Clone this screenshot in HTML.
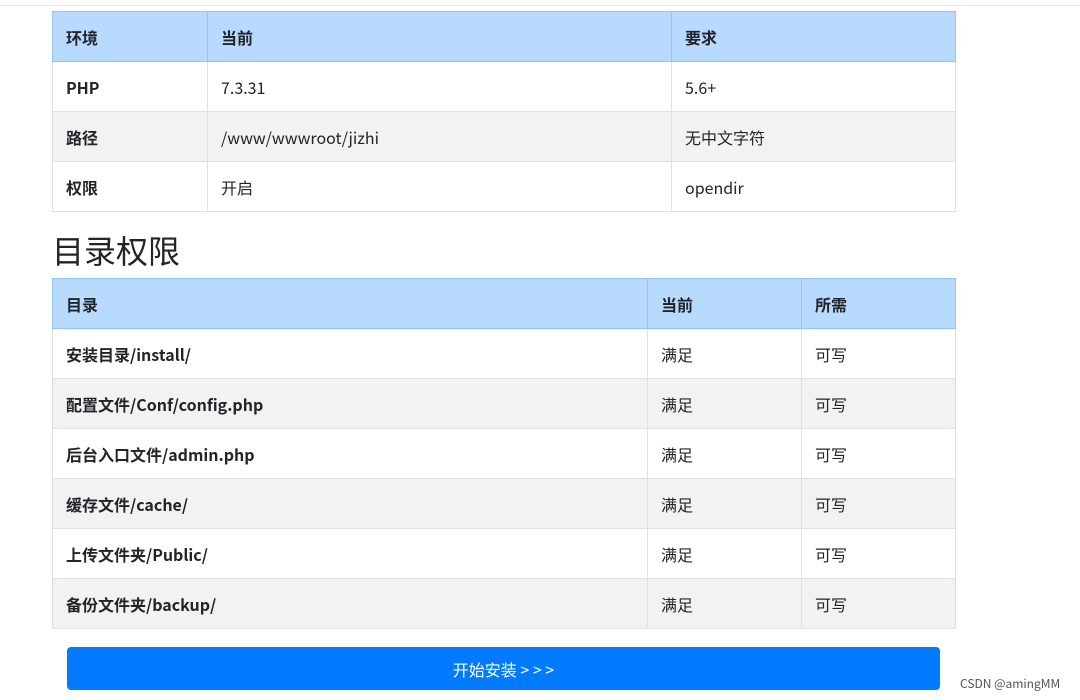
<!DOCTYPE html>
<html><head><meta charset="utf-8"><style>
body{margin:0;width:1080px;height:700px;background:#fff;font-family:"Noto Sans CJK SC","Liberation Sans",sans-serif;color:#212529;position:relative;overflow:hidden}
.top{position:absolute;left:0;top:5px;width:1080px;height:1px;background:#e5e5e5}
table{position:absolute;left:52px;border-collapse:collapse;font-size:16px;width:904px}
td,th{border:1px solid #dee2e6;height:49px;padding:0 0 0 13px;text-align:left;vertical-align:middle;line-height:20px}
th{background:#b8daff;border-color:#8fc4ff;font-weight:bold}
.b{font-weight:bold}
h2{position:absolute;left:52px;top:226px;margin:0;font-size:32px;font-weight:normal;line-height:48px}
.btn{position:absolute;left:67px;top:647px;width:873px;height:43px;background:#007bff;border-radius:4px;color:#fff;font-size:16px;text-align:center;line-height:45px}
.wm{position:absolute;left:960px;top:675px;font-size:12px;color:#555}
</style></head><body>
<div class="top"></div>
<table style="top:11px">
<thead><tr><th style="width:141px">环境</th><th style="width:450px">当前</th><th>要求</th></tr></thead>
<tbody>
<tr><td class="b" style="background:#fff">PHP</td><td style="background:#fff">7.3.31</td><td style="background:#fff">5.6+</td></tr>
<tr><td class="b" style="background:#f2f2f2">路径</td><td style="background:#f2f2f2">/www/wwwroot/jizhi</td><td style="background:#f2f2f2">无中文字符</td></tr>
<tr><td class="b" style="background:#fff">权限</td><td style="background:#fff">开启</td><td style="background:#fff">opendir</td></tr>
</tbody></table>
<h2>目录权限</h2>
<table style="top:278px">
<thead><tr><th style="width:581px">目录</th><th style="width:140px">当前</th><th>所需</th></tr></thead>
<tbody>
<tr><td class="b" style="background:#fff">安装目录/install/</td><td style="background:#fff">满足</td><td style="background:#fff">可写</td></tr>
<tr><td class="b" style="background:#f2f2f2">配置文件/Conf/config.php</td><td style="background:#f2f2f2">满足</td><td style="background:#f2f2f2">可写</td></tr>
<tr><td class="b" style="background:#fff">后台入口文件/admin.php</td><td style="background:#fff">满足</td><td style="background:#fff">可写</td></tr>
<tr><td class="b" style="background:#f2f2f2">缓存文件/cache/</td><td style="background:#f2f2f2">满足</td><td style="background:#f2f2f2">可写</td></tr>
<tr><td class="b" style="background:#fff">上传文件夹/Public/</td><td style="background:#fff">满足</td><td style="background:#fff">可写</td></tr>
<tr><td class="b" style="background:#f2f2f2">备份文件夹/backup/</td><td style="background:#f2f2f2">满足</td><td style="background:#f2f2f2">可写</td></tr>
</tbody></table>
<div class="btn">开始安装 &gt; &gt; &gt;</div>
<div class="wm">CSDN @amingMM</div>
</body></html>
